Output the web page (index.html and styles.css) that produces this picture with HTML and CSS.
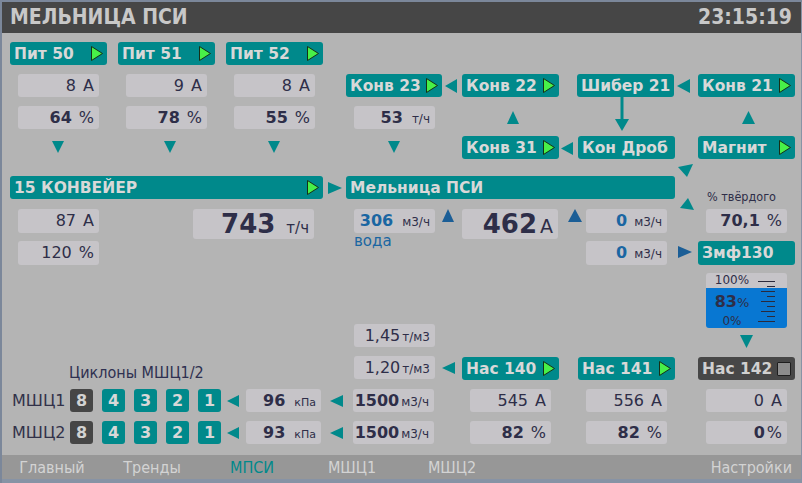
FILE: index.html
```html
<!DOCTYPE html>
<html lang="ru">
<head>
<meta charset="utf-8">
<title>МЕЛЬНИЦА ПСИ</title>
<link rel="stylesheet" href="styles.css">
</head>
<body>
<div class="screen">
  <header class="topbar">
    <span class="title">МЕЛЬНИЦА ПСИ</span>
    <span class="clock">23:15:19</span>
  </header>

  <main class="mimic">
    <svg class="links" width="802" height="483" viewBox="0 0 802 483">
      <g class="teal">
        <polygon points="52,141 64,141 58,153"/>
        <polygon points="164,141 176,141 170,153"/>
        <polygon points="268,141 280,141 274,153"/>
        <polygon points="388,141 400,141 394,153"/>
        <polygon points="445,86 457,79 457,93"/>
        <polygon points="677,86 690,79 690,93"/>
        <polygon points="513,111 507,124 519,124"/>
        <polygon points="748.5,111 742,124 755,124"/>
        <rect x="620.5" y="97" width="3" height="24"/>
        <polygon points="615,119 629,119 622,131"/>
        <polygon points="561,148.5 573,142 573,155"/>
        <polygon points="328,182 328,194 342,188"/>
        <polygon points="678,167 693,164 687,177"/>
        <polygon points="688,198 680,208 694,210"/>
        <polygon points="740,335 753,335 746.5,348"/>
        <polygon points="442,368 455,362 455,374"/>
      </g>
      <g class="blue">
        <polygon points="448,209 442,222 454,222"/>
        <polygon points="575,209 568,222 582,222"/>
        <polygon points="678,246 678,258 692,252"/>
      </g>
    </svg>

    <!-- Питатели -->
    <div class="node unit" style="left:10px;top:42px">
      <div class="btn"><span>Пит 50</span><svg class="play" viewBox="0 0 12 15"><polygon points="0.5,0.5 11.5,7.5 0.5,14.5"/></svg></div>
      <div class="box"><span class="val"><span class="num">8</span><span class="u">А</span></span></div>
      <div class="box"><span class="val"><b class="num">64</b><span class="u">%</span></span></div>
    </div>
    <div class="node unit" style="left:118px;top:42px">
      <div class="btn"><span>Пит 51</span><svg class="play" viewBox="0 0 12 15"><polygon points="0.5,0.5 11.5,7.5 0.5,14.5"/></svg></div>
      <div class="box"><span class="val"><span class="num">9</span><span class="u">А</span></span></div>
      <div class="box"><span class="val"><b class="num">78</b><span class="u">%</span></span></div>
    </div>
    <div class="node unit" style="left:226px;top:42px">
      <div class="btn"><span>Пит 52</span><svg class="play" viewBox="0 0 12 15"><polygon points="0.5,0.5 11.5,7.5 0.5,14.5"/></svg></div>
      <div class="box"><span class="val"><span class="num">8</span><span class="u">А</span></span></div>
      <div class="box"><span class="val"><b class="num">55</b><span class="u">%</span></span></div>
    </div>

    <!-- Конвейеры верхней линии -->
    <div class="node btn w96" style="left:346px;top:74px"><span>Конв 23</span><svg class="play" viewBox="0 0 12 15"><polygon points="0.5,0.5 11.5,7.5 0.5,14.5"/></svg></div>
    <div class="node box" style="left:354px;top:106px"><span class="val"><b class="num">53</b><span class="u sm wide">т/ч</span></span></div>
    <div class="node btn" style="left:462px;top:74px"><span>Конв 22</span><svg class="play" viewBox="0 0 12 15"><polygon points="0.5,0.5 11.5,7.5 0.5,14.5"/></svg></div>
    <div class="node btn" style="left:577px;top:74px"><span>Шибер 21</span></div>
    <div class="node btn" style="left:698px;top:74px"><span>Конв 21</span><svg class="play" viewBox="0 0 12 15"><polygon points="0.5,0.5 11.5,7.5 0.5,14.5"/></svg></div>
    <div class="node btn" style="left:462px;top:136px"><span>Конв 31</span><svg class="play" viewBox="0 0 12 15"><polygon points="0.5,0.5 11.5,7.5 0.5,14.5"/></svg></div>
    <div class="node btn" style="left:578px;top:136px"><span>Кон Дроб</span></div>
    <div class="node btn" style="left:698px;top:136px"><span>Магнит</span><svg class="play" viewBox="0 0 12 15"><polygon points="0.5,0.5 11.5,7.5 0.5,14.5"/></svg></div>

    <!-- Конвейер 15 и мельница -->
    <div class="node line" style="left:10px;top:176px">
      <div class="btn w313"><span>15 КОНВЕЙЕР</span><svg class="play" viewBox="0 0 12 15"><polygon points="0.5,0.5 11.5,7.5 0.5,14.5"/></svg></div>
      <div class="btn w329"><span>Мельница ПСИ</span></div>
    </div>

    <div class="node stack" style="left:18px;top:209px">
      <div class="box h24"><span class="val"><span class="num">87</span><span class="u">А</span></span></div>
      <div class="box h24"><span class="val"><span class="num">120</span><span class="u">%</span></span></div>
    </div>
    <div class="node box big w121" style="left:193px;top:209px"><span class="val"><b class="num">743</b><span class="u mid">т/ч</span></span></div>

    <div class="node col" style="left:354px;top:209px">
      <div class="box h24"><span class="val blue-t"><b class="num">306</b><span class="u sm wide">м3/ч</span></span></div>
      <span class="water">вода</span>
    </div>
    <div class="node box big w96" style="left:462px;top:209px"><span class="val"><b class="num">462</b><span class="u amp">А</span></span></div>
    <div class="node stack" style="left:586px;top:209px">
      <div class="box h24"><span class="val"><b class="num blue-t">0</b><span class="u sm">м3/ч</span></span></div>
      <div class="box h24"><span class="val"><b class="num blue-t">0</b><span class="u sm">м3/ч</span></span></div>
    </div>

    <span class="node caption" style="left:707px;top:190px">% твёрдого</span>
    <div class="node box h24" style="left:706px;top:209px"><span class="val"><b class="num">70,1</b><span class="u">%</span></span></div>
    <div class="node btn h24" style="left:698px;top:241px"><span>Змф130</span></div>

    <div class="node tank" style="left:706px;top:273px">
      <div class="tank-top">100%</div>
      <div class="tank-fill">
        <span class="tank-level"><b>83</b><span class="pct">%</span></span>
        <span class="tank-zero">0%</span>
      </div>
      <svg class="scale" width="81" height="55" viewBox="0 0 81 55">
        <g stroke="#2a2a3c" stroke-width="1">
          <line x1="52" y1="8.5" x2="69" y2="8.5"/>
          <line x1="61" y1="13.5" x2="69" y2="13.5"/>
          <line x1="55" y1="18.5" x2="69" y2="18.5"/>
          <line x1="61" y1="23.5" x2="69" y2="23.5"/>
          <line x1="55" y1="28.5" x2="69" y2="28.5"/>
          <line x1="61" y1="33.5" x2="69" y2="33.5"/>
          <line x1="55" y1="38.5" x2="69" y2="38.5"/>
          <line x1="61" y1="43.5" x2="69" y2="43.5"/>
          <line x1="52" y1="48.5" x2="69" y2="48.5"/>
        </g>
      </svg>
    </div>

    <div class="node stack gap9" style="left:354px;top:324px">
      <div class="box"><span class="val"><span class="num">1,45</span><span class="u sm tight">т/м3</span></span></div>
      <div class="box"><span class="val"><span class="num">1,20</span><span class="u sm tight">т/м3</span></span></div>
    </div>

    <span class="node cyclones" style="left:69px;top:363px">Циклоны МШЦ1/2</span>

    <div class="node mrow" style="left:12px;top:389px">
      <span class="mlabel">МШЦ1</span>
      <span class="sq dark">8</span>
      <span class="sq">4</span>
      <span class="sq">3</span>
      <span class="sq">2</span>
      <span class="sq">1</span>
      <svg class="ltri t1" viewBox="0 0 12 12"><polygon points="0,6 12,0 12,12"/></svg>
      <div class="box w75"><span class="val"><b class="num">96</b><span class="u xs wide">кПа</span></span></div>
      <svg class="ltri t2" viewBox="0 0 13 12"><polygon points="0,6 13,0 13,12"/></svg>
      <div class="box"><span class="val"><b class="num">1500</b><span class="u sm tight">м3/ч</span></span></div>
    </div>
    <div class="node mrow" style="left:12px;top:421px">
      <span class="mlabel">МШЦ2</span>
      <span class="sq dark">8</span>
      <span class="sq">4</span>
      <span class="sq">3</span>
      <span class="sq">2</span>
      <span class="sq">1</span>
      <svg class="ltri t1" viewBox="0 0 12 12"><polygon points="0,6 12,0 12,12"/></svg>
      <div class="box w75"><span class="val"><b class="num">93</b><span class="u xs wide">кПа</span></span></div>
      <svg class="ltri t2" viewBox="0 0 13 12"><polygon points="0,6 13,0 13,12"/></svg>
      <div class="box"><span class="val"><b class="num">1500</b><span class="u sm tight">м3/ч</span></span></div>
    </div>

    <!-- Насосы -->
    <div class="node unit" style="left:462px;top:357px">
      <div class="btn"><span>Нас 140</span><svg class="play" viewBox="0 0 12 15"><polygon points="0.5,0.5 11.5,7.5 0.5,14.5"/></svg></div>
      <div class="box"><span class="val"><span class="num">545</span><span class="u">А</span></span></div>
      <div class="box"><span class="val"><b class="num">82</b><span class="u">%</span></span></div>
    </div>
    <div class="node unit" style="left:578px;top:357px">
      <div class="btn"><span>Нас 141</span><svg class="play" viewBox="0 0 12 15"><polygon points="0.5,0.5 11.5,7.5 0.5,14.5"/></svg></div>
      <div class="box"><span class="val"><span class="num">556</span><span class="u">А</span></span></div>
      <div class="box"><span class="val"><b class="num">82</b><span class="u">%</span></span></div>
    </div>
    <div class="node unit" style="left:698px;top:357px">
      <div class="btn off"><span>Нас 142</span><span class="stop"></span></div>
      <div class="box"><span class="val"><span class="num">0</span><span class="u">А</span></span></div>
      <div class="box"><span class="val"><b class="num">0</b><span class="u tight">%</span></span></div>
    </div>
  </main>

  <nav class="tabs">
    <span class="tab">Главный</span>
    <span class="tab">Тренды</span>
    <span class="tab active">МПСИ</span>
    <span class="tab">МШЦ1</span>
    <span class="tab">МШЦ2</span>
    <span class="tab settings">Настройки</span>
  </nav>
</div>
</body>
</html>
```

FILE: styles.css
```css
* { box-sizing: border-box; }

html, body {
  margin: 0;
  padding: 0;
  background: #b4b4b4;
}

body {
  font-family: "DejaVu Sans", "Liberation Sans", sans-serif;
  color: #2e2e48;
}

.screen {
  position: relative;
  width: 802px;
  height: 483px;
  padding: 2px 1px 4px 2px;
  background: #b4b4b4;
  box-shadow: inset 2px 2px 0 #7b879a, inset -1px -4px 0 #8793a5;
  display: flex;
  flex-direction: column;
  overflow: hidden;
}

/* header */
.topbar {
  height: 31px;
  flex: none;
  background: #464646;
  display: flex;
  align-items: center;
  justify-content: space-between;
  padding: 0 9px 0 8px;
  color: #c8c8c8;
  font-family: "DejaVu Sans Condensed", "DejaVu Sans", sans-serif;
  font-stretch: condensed;
  font-weight: bold;
  font-size: 21px;
  line-height: 1;
}

/* diagram canvas */
.mimic {
  flex: 1;
}

.links {
  position: absolute;
  left: 0;
  top: 0;
  pointer-events: none;
}
.links .teal { fill: #00898b; }
.links .blue { fill: #1b5e96; }

.node { position: absolute; }

.unit {
  display: flex;
  flex-direction: column;
  align-items: center;
  gap: 9px;
}

.stack {
  display: flex;
  flex-direction: column;
  gap: 8px;
}
.stack.gap9 { gap: 9px; }

.col {
  display: flex;
  flex-direction: column;
}

.line {
  display: flex;
  gap: 23px;
}

/* teal device buttons */
.btn {
  width: 97px;
  height: 23px;
  background: #00898b;
  border-radius: 3px;
  color: #d8d8d8;
  font-weight: bold;
  font-size: 15.5px;
  display: flex;
  align-items: center;
  justify-content: space-between;
  padding: 0 4px 0 4px;
  white-space: nowrap;
}
.btn.off { background: #474747; color: #d0d0d0; }
.btn.h24 { height: 24px; }

.play {
  width: 12px;
  height: 15px;
  flex: none;
}
.play polygon {
  fill: #48f048;
  stroke: #163016;
  stroke-width: 1;
}

.stop {
  width: 14px;
  height: 14px;
  background: #8c8c8c;
  border: 1px solid #1e1e1e;
  border-radius: 1px;
  flex: none;
}

/* value boxes */
.box {
  width: 81px;
  height: 23px;
  background: #c6c4c8;
  border-radius: 3px;
  display: flex;
  align-items: center;
  justify-content: flex-end;
  padding-right: 5px;
  color: #2e2e48;
  font-size: 16px;
  white-space: nowrap;
}
.box.h24 { height: 24px; }
.box.big { height: 30px; }
.box.big .num { font-size: 26px; }

.val { line-height: 1; }
.num { font-weight: normal; }
b.num { font-weight: bold; }
.u { margin-left: 7px; font-weight: normal; }
.u.sm { font-size: 12px; }
.u.xs { font-size: 11px; }
.u.mid { font-size: 15px; margin-left: 11px; }
.u.amp { font-size: 19px; margin-left: 3px; }
.u.wide { margin-left: 9px; }
.u.tight { margin-left: 2px; }

.blue-t { color: #1a66a2; }
.blue-t .u { color: #2e2e48; }

.water {
  margin-top: 0;
  font-size: 15px;
  line-height: 17px;
  color: #1a66a2;
}

.caption {
  font-family: "DejaVu Sans Condensed", "DejaVu Sans", sans-serif;
  font-stretch: condensed;
  font-size: 12.5px;
  line-height: 14px;
  color: #2e2e48;
  white-space: nowrap;
}

/* tank */
.tank {
  width: 81px;
  height: 55px;
  border-radius: 3px;
  overflow: hidden;
  display: flex;
  flex-direction: column;
}
.tank-top {
  height: 15px;
  background: #c6c4c8;
  width: 52px;
  box-shadow: 40px 0 0 #c6c4c8;
  text-align: center;
  font-size: 12px;
  line-height: 15px;
  color: #2e2e48;
}
.tank-fill {
  flex: 1;
  background: #0877d2;
  display: flex;
  flex-direction: column;
  align-items: center;
  width: 52px;
  box-shadow: 40px 0 0 #0877d2;
  padding-top: 4px;
  color: #2e2e48;
}
.tank-level { line-height: 20px; font-size: 16px; }
.tank-level .pct { font-size: 13px; }
.tank-zero { font-size: 12px; line-height: 16px; }
.scale {
  position: absolute;
  left: 0;
  top: 0;
}

/* cyclones */
.cyclones {
  font-family: "DejaVu Sans Condensed", "DejaVu Sans", sans-serif;
  font-stretch: condensed;
  font-size: 16px;
  line-height: 19px;
  color: #2e3050;
  white-space: nowrap;
}

.mrow {
  display: flex;
  align-items: center;
  height: 23px;
}
.mlabel {
  width: 58px;
  font-size: 16px;
  color: #32324a;
  white-space: nowrap;
}
.sq {
  width: 23px;
  height: 23px;
  border-radius: 3px;
  background: #00898b;
  color: #d8d8d8;
  font-weight: bold;
  font-size: 16px;
  display: flex;
  align-items: center;
  justify-content: center;
  margin-left: 9px;
}
.sq.dark { background: #464646; margin-left: 0; color: #d2d2d2; }
.ltri { fill: #00898b; height: 12px; flex: none; }
.ltri.t1 { width: 12px; margin: 0 7px 0 6px; }
.ltri.t2 { width: 13px; margin: 0 10px 0 9px; }

/* width modifiers (after base components so they win) */
.w96 { width: 96px; }
.w313 { width: 313px; }
.w329 { width: 329px; }
.w121 { width: 121px; }
.w75 { width: 75px; }

/* bottom navigation */
.tabs {
  height: 24px;
  flex: none;
  background: #979797;
  display: flex;
  align-items: center;
  padding-top: 1px;
  font-family: "DejaVu Sans Condensed", "DejaVu Sans", sans-serif;
  font-stretch: condensed;
  font-size: 16px;
  color: #d3d3d3;
}
.tab {
  width: 100px;
  text-align: center;
  white-space: nowrap;
}
.tab.active { color: #00898b; }
.tab.settings {
  width: auto;
  margin-left: auto;
  padding-right: 9px;
}
```
